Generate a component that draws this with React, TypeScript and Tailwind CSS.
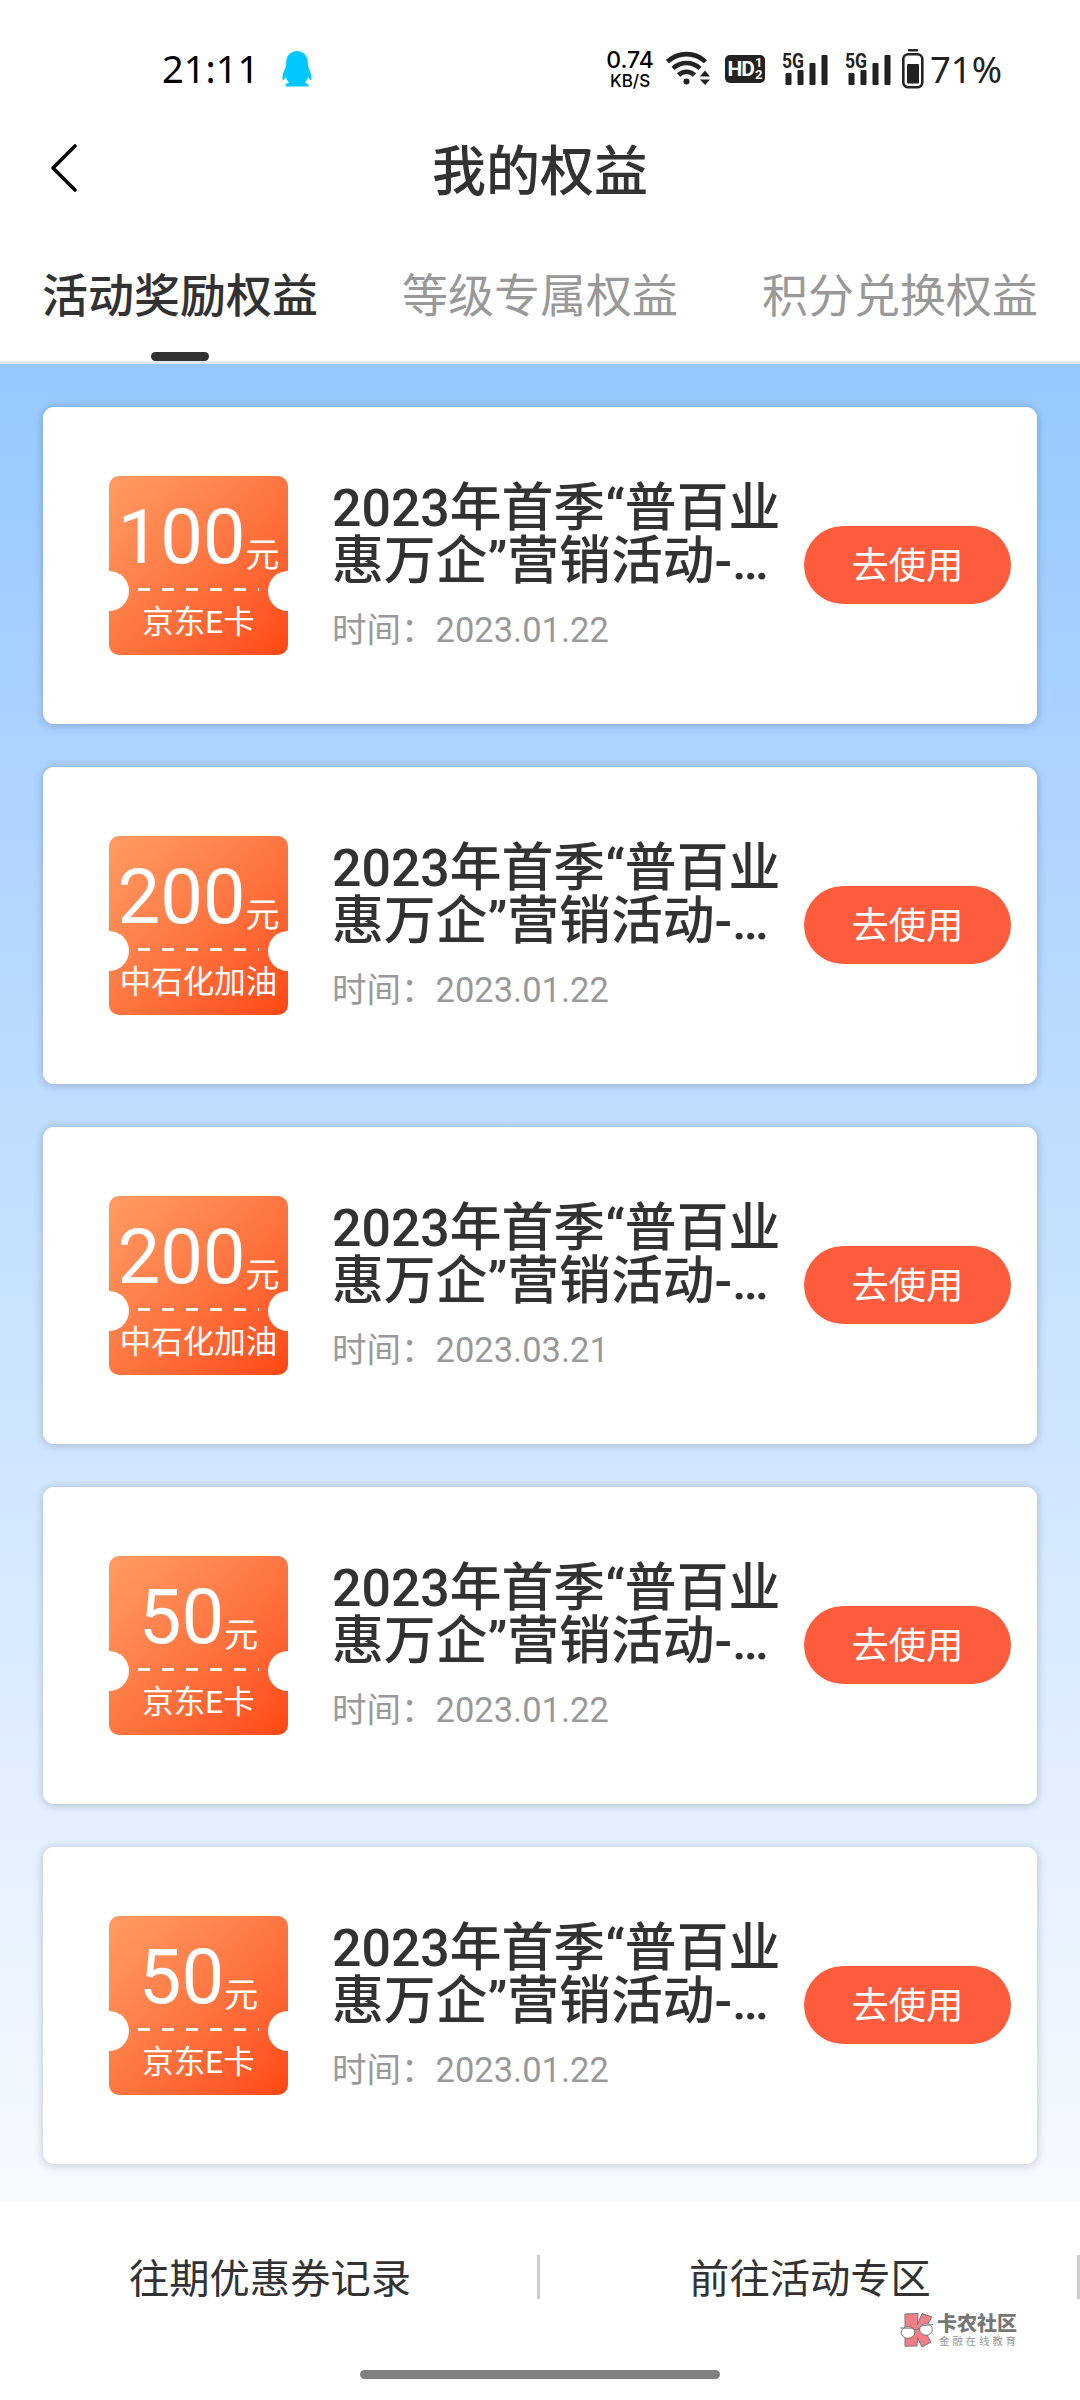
import clsx from 'clsx'

type Coupon = {
  id: number
  amount: number
  label: string
  date: string
}

const TITLE = '2023年首季“普百业惠万企”营销活动-…'

const TABS = ['活动奖励权益', '等级专属权益', '积分兑换权益']

const COUPONS: Coupon[] = [
  { id: 1, amount: 100, label: '京东E卡', date: '2023.01.22' },
  { id: 2, amount: 200, label: '中石化加油', date: '2023.01.22' },
  { id: 3, amount: 200, label: '中石化加油', date: '2023.03.21' },
  { id: 4, amount: 50, label: '京东E卡', date: '2023.01.22' },
  { id: 5, amount: 50, label: '京东E卡', date: '2023.01.22' },
]

function PenguinIcon() {
  return (
    <svg width="30" height="36" viewBox="0 0 30 36" className="ml-[23px] text-[#00c8ff]" fill="currentColor">
      <path d="M15 0C8.400 0 4.200 5 4.200 11.500c0 1.800-.2 3.500-.7 5C1.900 20.300.4 24 .4 27.200c0 2 .9 2.600 1.800 1.200l1.700-2.600c.5 2.300 1.600 4.200 3.200 5.700-1.600.6-3.500 1.400-3.700 2.500-.1.900.5 1.500 1.700 1.500h19.800c1.200 0 1.800-.6 1.700-1.500-.2-1.100-2.100-1.900-3.700-2.500 1.600-1.500 2.700-3.400 3.200-5.700l1.700 2.600c.9 1.400 1.800.8 1.800-1.200 0-3.200-1.500-6.900-3.100-10.700-.5-1.500-.7-3.200-.7-5C25.800 5 21.600 0 15 0Z" />
    </svg>
  )
}

function WifiIcon() {
  return (
    <svg width="45" height="36" viewBox="0 0 45 36" className="ml-3" fill="none" stroke="#222" strokeWidth="4.600">
      <path d="M1.500 10.600C12.500 .6 28.500 .6 39.500 10.600" />
      <path d="M7 17.400c8-7.200 19-7.200 27 0" />
      <path d="M12.500 24c4.600-4.400 11.400-4.400 16 0" />
      <circle cx="20.500" cy="30.500" r="3" fill="#222" stroke="none" />
      <path d="M39 19.500l5 6H34zM39 34l5-5.500H34z" fill="#222" stroke="none" />
    </svg>
  )
}

function HdBadge() {
  return (
    <div className="ml-[14px] flex h-7 w-10 items-center justify-center gap-px rounded-[5px] bg-[#222] text-white">
      <span className="text-[21px] leading-none font-bold tracking-[-1px]">HD</span>
      <span className="flex flex-col text-[13px] leading-[12px] font-bold">
        <span>1</span>
        <span>2</span>
      </span>
    </div>
  )
}

function SignalIcon({ className }: { className?: string }) {
  return (
    <svg width="48" height="34" viewBox="0 0 48 34" className={clsx('overflow-visible', className)} fill="#222">
      <text x="0" y="16" fontSize="20" fontWeight="700" textLength="22" lengthAdjust="spacingAndGlyphs">
        5G
      </text>
      <rect x="3.500" y="21" width="6" height="12" rx="1" />
      <rect x="15.500" y="18" width="6" height="15" rx="1" />
      <rect x="27.500" y="11" width="6" height="22" rx="1" />
      <rect x="39.500" y="3" width="6" height="30" rx="1" />
    </svg>
  )
}

function BatteryIcon() {
  return (
    <svg width="22" height="40" viewBox="0 0 22 40" className="ml-[9px]">
      <rect x="6" y="0" width="10" height="2.500" rx="1" fill="#222" />
      <rect x="1.300" y="5.300" width="19" height="33" rx="5" fill="none" stroke="#222" strokeWidth="2.600" />
      <rect x="5" y="15" width="12" height="19.500" rx="1" fill="#222" />
    </svg>
  )
}

function StatusBar() {
  return (
    <div className="flex h-[138px] items-center pr-[78px] pl-[162px]">
      <span className="pb-0.5 font-['Noto_Sans'] text-[38px] leading-none text-black">21:11</span>
      <PenguinIcon />
      <div className="ml-auto flex items-center">
        <div className="flex flex-col items-center font-['Inter'] text-black">
          <span className="text-[23px] leading-[23px] font-medium">0.74</span>
          <span className="text-[17px] leading-[18px] font-medium">KB/S</span>
        </div>
        <WifiIcon />
        <HdBadge />
        <SignalIcon className="ml-[17px]" />
        <SignalIcon className="ml-[15px]" />
        <BatteryIcon />
        <span className="ml-[6px] font-['Noto_Sans'] text-[36.500px] leading-none text-[#222]">71%</span>
      </div>
    </div>
  )
}

function Header() {
  return (
    <header className="grid h-[100px] grid-cols-[120px_1fr_120px]">
      <button type="button" aria-label="返回" className="flex items-start pt-1 pl-12">
        <svg width="32" height="52" viewBox="0 0 32 52" fill="none" stroke="#000" strokeWidth="3.600" strokeLinecap="round" strokeLinejoin="round">
          <path d="M27 4L5 26l22 22" />
        </svg>
      </button>
      <h1 className="pt-[7px] text-center text-[54px] leading-[56px] font-medium text-[#323233]">我的权益</h1>
    </header>
  )
}

function Tabs() {
  return (
    <nav className="grid h-[126px] grid-cols-3 border-b-[3px] border-[#e4e8ee]">
      {TABS.map((tab, index) => (
        <button
          key={tab}
          type="button"
          className={clsx(
            'flex flex-col items-center justify-between pt-[35px] text-[46px] leading-[46px]',
            index === 0 ? 'font-medium text-[#323233]' : 'text-[#999]',
          )}
        >
          {tab}
          {index === 0 && <span className="h-[9px] w-[58px] rounded-full bg-[#323233]" />}
        </button>
      ))}
    </nav>
  )
}

function Ticket({ amount, label }: { amount: number; label: string }) {
  return (
    <div className="relative h-[179px] w-[179px] shrink-0 overflow-hidden rounded-[10px] bg-linear-135 from-[#ff9c64] to-[#ff4610] text-white">
      <div className="flex h-[98px] items-start justify-center pt-[23px]">
        <span className="text-[76px] leading-[76px]">{amount}</span>
        <span className="pt-[36px] text-[34px] leading-[40px]">元</span>
      </div>
      <div className="mx-[29px] mt-[14px] h-[3px] bg-[repeating-linear-gradient(90deg,#fff_0_12px,transparent_12px_24px)]" />
      <p className="mt-[15px] text-center text-[31.500px] leading-[34px] whitespace-nowrap">{label}</p>
      {/* punched notches */}
      <span className="absolute top-[95px] -left-5 size-10 rounded-full bg-white" />
      <span className="absolute top-[95px] -right-5 size-10 rounded-full bg-white" />
    </div>
  )
}

function CouponCard({ coupon }: { coupon: Coupon }) {
  return (
    <article className="flex h-[317px] items-center rounded-[11px] bg-white pr-[26px] pl-[66px] shadow-[0_1px_10px_rgba(0,0,0,0.22)]">
      <Ticket amount={coupon.amount} label={coupon.label} />
      <div className="ml-11 w-[460px] pt-[3px]">
        <h2 className="text-[51.800px] leading-[53px] font-medium text-[#323233]">{TITLE}</h2>
        <p className="mt-[19px] text-[34.500px] leading-[46px] text-[#999]">时间：{coupon.date}</p>
      </div>
      <button type="button" className="mb-px ml-auto h-[78px] w-[207px] rounded-full bg-[#ff5b3d] pt-1 text-[37.300px] leading-none text-white">
        去使用
      </button>
    </article>
  )
}

function Watermark() {
  return (
    <div className="absolute top-[111px] left-[899px] flex gap-[3px]">
      <svg width="35" height="36" viewBox="0 0 35 36" stroke="#777" strokeWidth="1">
        <path d="M6 2l13-.5-.5 11L23 1.500l10 3.500-8 13 7 12-9 5-4.500-9.500L18 34l-12 .2z" fill="#f47e88" />
        <ellipse cx="9" cy="20.500" rx="6.800" ry="5.800" fill="#fff" />
        <ellipse cx="27" cy="17.500" rx="6.300" ry="5.800" fill="#fff" />
        <path d="M1 16l14 .2M21 14l13-1.500M15.500 18l5.500-1" fill="none" />
      </svg>
      <div className="whitespace-nowrap">
        <p className="text-[20px] leading-6 font-black text-[#777]">卡农社区</p>
        <p className="pl-0.5 text-[10.500px] leading-3 tracking-[2.800px] text-[#999]">金融在线教育</p>
      </div>
    </div>
  )
}

function Footer() {
  return (
    <footer className="relative h-[199px] bg-white text-[40.300px] leading-none text-[#323233]">
      <div className="grid grid-cols-2 pt-[54px]">
        <a className="flex h-11 items-center justify-center border-r-[3px] border-[#ccc] pt-1.5 pl-[3px]">往期优惠券记录</a>
        <a className="flex h-11 items-center justify-center border-r-[3px] border-[#ccc] pt-1.5 pl-[3px]">前往活动专区</a>
      </div>
      <Watermark />
      <div className="mx-auto mt-[71px] h-[9px] w-[360px] rounded-full bg-[#808080]" />
    </footer>
  )
}

export default function App() {
  return (
    <div className="flex h-[2400px] w-[1080px] flex-col overflow-hidden bg-white font-['Roboto','Noto_Sans_CJK_SC',sans-serif]">
      <StatusBar />
      <Header />
      <Tabs />
      <main className="flex flex-1 flex-col gap-[43px] bg-linear-to-b from-[#96c8ff] to-[#f7faff] px-[43px] pt-[43px]">
        {COUPONS.map((coupon) => (
          <CouponCard key={coupon.id} coupon={coupon} />
        ))}
      </main>
      <Footer />
    </div>
  )
}
